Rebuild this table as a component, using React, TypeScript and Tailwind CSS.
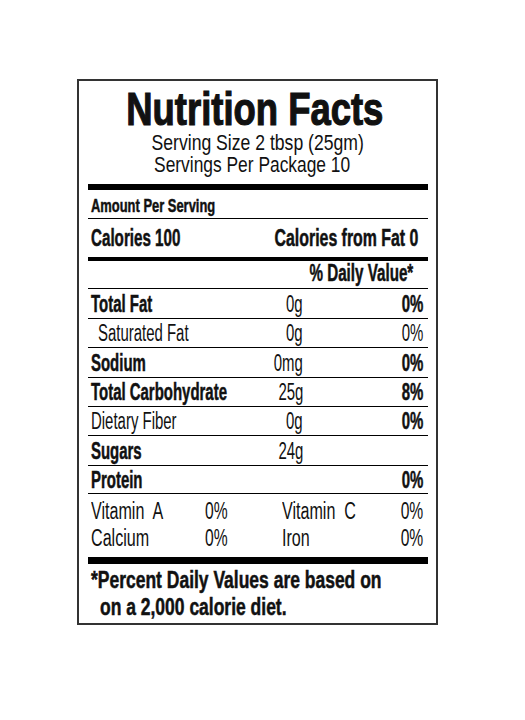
type Row = {
  label: string;
  amount?: string;
  dv?: string;
  bold?: boolean;
  dvBold?: boolean;
  indent?: boolean;
  h: string;
};

// heights include the 1px rule under each row
const rows: Row[] = [
  { label: "Total Fat", amount: "0g", dv: "0%", bold: true, dvBold: true, h: "h-[30px]" },
  { label: "Saturated Fat", amount: "0g", dv: "0%", indent: true, h: "h-[29px]" },
  { label: "Sodium", amount: "0mg", dv: "0%", bold: true, dvBold: true, h: "h-[30px]" },
  { label: "Total Carbohydrate", amount: "25g", dv: "8%", bold: true, dvBold: true, h: "h-[29px]" },
  { label: "Dietary Fiber", amount: "0g", dv: "0%", dvBold: true, h: "h-[29px]" },
  { label: "Sugars", amount: "24g", bold: true, h: "h-[30px]" },
  { label: "Protein", dv: "0%", bold: true, dvBold: true, h: "h-[28px]" },
];

const heavy = "font-bold [-webkit-text-stroke:0.5px_#111]";

function NutrientRow({ row }: { row: Row }) {
  return (
    <div className={`flex items-center border-b border-black text-[23px] leading-[24px] ${row.h}`}>
      <div className={`w-[155px] min-w-0 ${row.indent ? "pl-[10px]" : "pl-[3px]"}`}>
        <span className={`inline-block origin-left scale-x-[0.65] whitespace-nowrap ${row.bold ? heavy : ""}`}>
          {row.label}
        </span>
      </div>
      <div className="w-[60px] text-right">
        {row.amount && (
          <span className="inline-block origin-right scale-x-[0.65] whitespace-nowrap">{row.amount}</span>
        )}
      </div>
      <div className="flex-1 pr-[5px] text-right">
        {row.dv && (
          <span className={`inline-block origin-right scale-x-[0.65] whitespace-nowrap ${row.dvBold ? heavy : ""}`}>
            {row.dv}
          </span>
        )}
      </div>
    </div>
  );
}

function VitaminLine({ a, av, b, bv }: { a: string; av: string; b: string; bv: string }) {
  return (
    <div className="flex">
      <div className="w-[117px] pl-[3px]">
        <span className="inline-block origin-left scale-x-[0.7] whitespace-pre">{a}</span>
      </div>
      <div className="w-[77px]">
        <span className="inline-block origin-left scale-x-[0.68] whitespace-nowrap">{av}</span>
      </div>
      <div className="flex-1">
        <span className="inline-block origin-left scale-x-[0.7] whitespace-pre">{b}</span>
      </div>
      <div className="pr-[5px] text-right">
        <span className="inline-block origin-right scale-x-[0.68] whitespace-nowrap">{bv}</span>
      </div>
    </div>
  );
}

export default function App() {
  return (
    <div className="min-h-screen bg-white pl-[77px] pt-[79px] font-['Liberation_Sans',Arial,sans-serif] text-[#111]">
      <div className="w-[361px] border-2 border-[#333] pl-[9px] pr-[8px]">
        <div className="pr-[6px] pt-[5px] text-center text-[47px] font-bold leading-[46px]">
          <span className="inline-block origin-center scale-x-[0.775] whitespace-nowrap [-webkit-text-stroke:1.2px_#111]">
            Nutrition Facts
          </span>
        </div>
        <div className="text-center text-[22px] leading-[22px]">
          <div>
            <span className="inline-block origin-center scale-x-[0.8] whitespace-nowrap">Serving Size 2 tbsp (25gm)</span>
          </div>
          <div className="pr-[12px]">
            <span className="inline-block origin-center scale-x-[0.79] whitespace-nowrap">Servings Per Package 10</span>
          </div>
        </div>

        <div className="mt-[8px] h-[6px] bg-black" />

        <div className="border-b border-black pb-[2px] pl-[3px] pt-[6px] text-[19px] leading-[20px]">
          <span className={`inline-block origin-left scale-x-[0.68] whitespace-nowrap ${heavy}`}>Amount Per Serving</span>
        </div>

        <div className="flex border-b-4 border-black pb-[7px] pl-[3px] pr-[10px] pt-[7px] text-[23px] leading-[24px]">
          <span className={`inline-block shrink-0 origin-left scale-x-[0.66] whitespace-nowrap ${heavy}`}>Calories 100</span>
          <div className="flex min-w-0 flex-1 justify-end">
            <span className={`inline-block shrink-0 origin-right scale-x-[0.69] whitespace-nowrap ${heavy}`}>
              Calories from Fat 0
            </span>
          </div>
        </div>

        <div className="border-b border-black pb-[3px] pr-[15px] text-right text-[23px] leading-[24px]">
          <span className={`inline-block origin-right scale-x-[0.66] whitespace-nowrap ${heavy}`}>% Daily Value*</span>
        </div>

        {rows.map((r) => (
          <NutrientRow key={r.label} row={r} />
        ))}

        <div className="pb-[5px] pt-[4px] text-[23px] leading-[27px]">
          <VitaminLine a={"Vitamin  A"} av="0%" b={"Vitamin  C"} bv="0%" />
          <VitaminLine a="Calcium" av="0%" b="Iron" bv="0%" />
        </div>

        <div className="h-[7px] bg-black" />

        <div className="pb-[2px] pl-[3px] pt-[3px] text-[23px] leading-[27px]">
          <div>
            <span className={`inline-block origin-left scale-x-[0.76] whitespace-nowrap ${heavy}`}>
              *Percent Daily Values are based on
            </span>
          </div>
          <div className="pl-[9px]">
            <span className={`inline-block origin-left scale-x-[0.76] whitespace-nowrap ${heavy}`}>
              on a 2,000 calorie diet.
            </span>
          </div>
        </div>
      </div>
    </div>
  );
}
